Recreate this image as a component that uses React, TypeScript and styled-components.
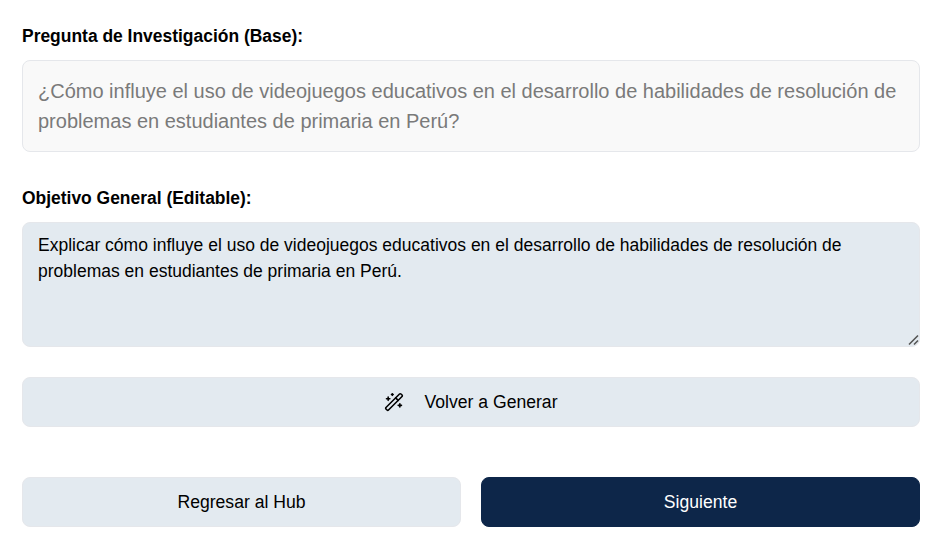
import { createGlobalStyle } from 'styled-components';
import styled from 'styled-components';
import { WandSparkles } from 'lucide-react';

const GlobalStyle = createGlobalStyle`
  html, body {
    margin: 0;
    padding: 0;
    background: #ffffff;
    font-family: "Liberation Sans", Arial, sans-serif;
  }
`;

const Page = styled.div`
  width: 898px;
  padding: 26px 26px 26px 22px;
  display: flex;
  flex-direction: column;
`;

const Label = styled.label`
  display: block;
  font-size: 17.45px;
  line-height: 20px;
  font-weight: 700;
  color: #000000;
  margin-bottom: 14px;
`;

const BaseQuestion = styled.div`
  box-sizing: border-box;
  height: 92px;
  padding: 15px;
  background: #f9f9f9;
  border: 1px solid #e5e7eb;
  border-radius: 8px;
  font-size: 20px;
  line-height: 30px;
  color: #7a7a7a;
  margin-bottom: 36px;
`;

const ObjectiveInput = styled.textarea`
  box-sizing: border-box;
  display: block;
  width: 100%;
  height: 125px;
  padding: 9px 15px;
  background: #e3eaf0;
  border: 1px solid #e5e7eb;
  border-radius: 8px;
  font-family: inherit;
  font-size: 17.5px;
  line-height: 26px;
  color: #000000;
  outline: none;
  resize: vertical;
  margin-bottom: 30px;

  &::-webkit-resizer {
    background: url("data:image/svg+xml,%3Csvg xmlns='http://www.w3.org/2000/svg' width='15' height='15'%3E%3Cpath d='M5 13.5 14 4.5M10 13.5l4-4' stroke='%23555' stroke-width='1.6' fill='none'/%3E%3C/svg%3E") no-repeat;
  }
`;

const Button = styled.button<{ $primary?: boolean }>`
  box-sizing: border-box;
  height: 50px;
  display: flex;
  align-items: center;
  justify-content: center;
  gap: 20px;
  width: 100%;
  background: ${(p) => (p.$primary ? '#0d2649' : '#e3eaf0')};
  color: ${(p) => (p.$primary ? '#ffffff' : '#000000')};
  border: 1px solid ${(p) => (p.$primary ? '#0d2649' : '#e5e7eb')};
  border-radius: 8px;
  font-family: inherit;
  font-size: 17.6px;
  cursor: pointer;
`;

const ButtonRow = styled.div`
  display: grid;
  grid-template-columns: 1fr 1fr;
  gap: 20px;
  margin-top: 50px;
`;

export default function App() {
  return (
    <>
      <GlobalStyle />
      <Page>
        <Label>Pregunta de Investigación (Base):</Label>
        <BaseQuestion>
          ¿Cómo influye el uso de videojuegos educativos en el desarrollo de habilidades de resolución de problemas en
          estudiantes de primaria en Perú?
        </BaseQuestion>

        <Label>Objetivo General (Editable):</Label>
        <ObjectiveInput defaultValue="Explicar cómo influye el uso de videojuegos educativos en el desarrollo de habilidades de resolución de problemas en estudiantes de primaria en Perú." />

        <Button>
          <WandSparkles size={20} strokeWidth={1.9} />
          Volver a Generar
        </Button>

        <ButtonRow>
          <Button>Regresar al Hub</Button>
          <Button $primary>Siguiente</Button>
        </ButtonRow>
      </Page>
    </>
  );
}
